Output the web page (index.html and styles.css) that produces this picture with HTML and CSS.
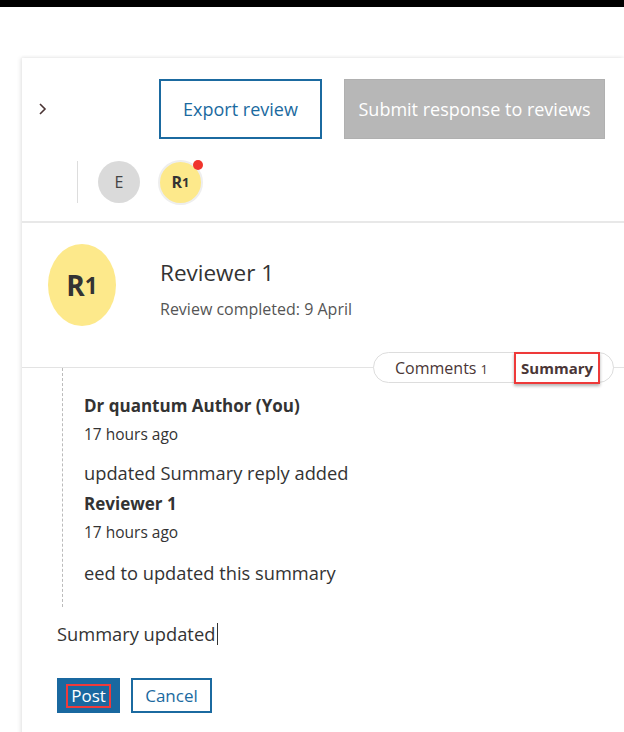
FILE: index.html
```html
<!DOCTYPE html>
<html lang="en">
<head>
    <meta charset="UTF-8">
    <title>Review summary</title>
    <link rel="stylesheet" href="styles.css">
</head>
<body>
    <div class="topbar"></div>

    <div class="panel">
        <div class="panel-head">
            <div class="actions">
                <span class="chevron">
                    <svg width="10" height="14" viewBox="0 0 10 14"><path d="M2 2 L7 7 L2 12" fill="none" stroke="#4a3434" stroke-width="1.6"/></svg>
                </span>
                <button class="btn-outline btn-export">Export review</button>
                <button class="btn-disabled">Submit response to reviews</button>
            </div>
            <div class="avatars">
                <span class="avatar-sep"></span>
                <span class="avatar avatar-e">E</span>
                <span class="avatar avatar-r1">R<small>1</small><i class="dot"></i></span>
            </div>
        </div>

        <div class="reviewer">
            <div class="big-avatar">R<small>1</small></div>
            <div class="reviewer-info">
                <h2>Reviewer 1</h2>
                <p>Review completed: 9 April</p>
            </div>
        </div>

        <div class="tabs-line">
            <div class="tabs">
                <span class="tab">Comments <small>1</small></span>
                <span class="tab tab-active">Summary</span>
            </div>
        </div>

        <div class="thread">
            <div class="reply">
                <div class="reply-author">Dr quantum Author (You)</div>
                <div class="reply-time">17 hours ago</div>
                <div class="reply-text">updated Summary reply added</div>
            </div>
            <div class="reply">
                <div class="reply-author">Reviewer 1</div>
                <div class="reply-time">17 hours ago</div>
                <div class="reply-text">eed to updated this summary</div>
            </div>
        </div>

        <div class="editor">
            <div class="editor-text">Summary updated<span class="caret"></span></div>
            <div class="editor-actions">
                <button class="btn-post"><span>Post</span></button>
                <button class="btn-outline btn-cancel">Cancel</button>
            </div>
        </div>
    </div>
</body>
</html>
```

FILE: styles.css
```css
body {
    margin: 0;
    padding: 0;
    background-color: #ffffff;
    font-family: "Open Sans", Arial, sans-serif;
    color: #333333;
    height: 732px;
    overflow: hidden;
}

.topbar {
    height: 7px;
    background-color: #000000;
}

.panel {
    margin-top: 51px;
    margin-left: 22px;
    height: 680px;
    background-color: #ffffff;
    box-shadow: -2px 0 4px rgba(0, 0, 0, 0.08), 0 -1px 3px rgba(0, 0, 0, 0.05);
}

.panel-head {
    padding-top: 21px;
    border-bottom: 2px solid #e8e8e8;
    height: 165px;
    box-sizing: border-box;
}

.actions {
    display: flex;
    align-items: center;
    height: 60px;
}

.chevron {
    width: 10px;
    height: 14px;
    margin-left: 16px;
    margin-right: 111px;
    display: flex;
}

button {
    font-family: "Open Sans", Arial, sans-serif;
    cursor: pointer;
}

.btn-outline {
    background-color: #ffffff;
    border: 2px solid #1b6aa0;
    color: #1b6aa0;
    box-sizing: border-box;
}

.btn-export {
    width: 163px;
    height: 60px;
    font-size: 18px;
    margin-right: 22px;
}

.btn-disabled {
    width: 261px;
    height: 60px;
    border: 1px solid #b0b0b0;
    background-color: #b7b7b7;
    color: #ffffff;
    font-size: 18px;
}

.avatars {
    display: flex;
    align-items: center;
    margin-top: 21px;
    height: 44px;
}

.avatar-sep {
    width: 1px;
    height: 42px;
    background-color: #dddddd;
    margin-left: 55px;
    margin-right: 20px;
}

.avatar {
    width: 42px;
    height: 42px;
    border-radius: 50%;
    display: flex;
    align-items: center;
    justify-content: center;
    font-size: 16px;
    box-sizing: border-box;
    position: relative;
}

.avatar-e {
    background-color: #dadada;
    color: #444444;
}

.avatar-r1 {
    width: 45px;
    height: 45px;
    margin-left: 18px;
    background-color: #fde98b;
    border: 2px solid #eeeeee;
    font-weight: bold;
    color: #333333;
}

.avatar small,
.big-avatar small {
    font-size: 0.8em;
}

.dot {
    position: absolute;
    top: -2px;
    right: -2px;
    width: 10px;
    height: 10px;
    border-radius: 50%;
    background-color: #f0342c;
}

.reviewer {
    display: flex;
    align-items: center;
    height: 145px;
    border-bottom: 1px solid #e3e3e3;
    box-sizing: border-box;
    padding-bottom: 20px;
}

.big-avatar {
    width: 68px;
    height: 82px;
    border-radius: 50%;
    background-color: #fde98b;
    margin-left: 26px;
    margin-right: 44px;
    display: flex;
    align-items: center;
    justify-content: center;
    font-size: 28px;
    font-weight: bold;
    color: #333333;
}

.reviewer-info {
    padding-top: 6px;
}

.reviewer-info h2 {
    margin: 0 0 10px 0;
    font-size: 22.5px;
    font-weight: normal;
    color: #333333;
}

.reviewer-info p {
    margin: 0;
    font-size: 16px;
    color: #555555;
}

.tabs-line {
    position: relative;
    height: 0;
}

.tabs {
    position: absolute;
    left: 351px;
    top: -16px;
    width: 241px;
    height: 31px;
    border: 1px solid #dddddd;
    border-radius: 16px;
    background-color: #ffffff;
    display: flex;
    align-items: center;
    box-sizing: border-box;
}

.tab {
    font-size: 16px;
    color: #4a3636;
    padding-left: 21px;
}

.tab small {
    font-size: 13px;
}

.tab-active {
    font-weight: bold;
    font-size: 15px;
    margin-left: 26px;
    padding: 4px 5px;
    border: 2px solid #ee3a3a;
    box-shadow: 0 2px 3px rgba(0, 0, 0, 0.3);
}

.thread {
    margin-left: 40px;
    border-left: 1px dashed #bbbbbb;
    padding: 24px 0 0 21px;
    height: 239px;
    box-sizing: border-box;
}

.reply-author {
    font-size: 17px;
    font-weight: bold;
    line-height: 28px;
}

.reply-time {
    font-size: 15.5px;
    line-height: 28px;
}

.reply-text {
    font-size: 18.3px;
    line-height: 28px;
    margin-top: 11px;
}

.reply + .reply {
    margin-top: 3px;
}

.reply + .reply .reply-text {
    margin-top: 13px;
}

.editor {
    padding-left: 35px;
    padding-top: 14px;
}

.editor-text {
    font-size: 18.3px;
    line-height: 26px;
    display: flex;
    align-items: center;
}

.caret {
    display: inline-block;
    width: 1px;
    height: 22px;
    background-color: #333333;
    margin-left: 2px;
}

.editor-actions {
    display: flex;
    margin-top: 31px;
}

.btn-post {
    width: 63px;
    height: 35px;
    background-color: #1968a0;
    border: none;
    color: #ffffff;
    font-size: 17px;
    display: flex;
    align-items: center;
    justify-content: center;
    margin-right: 11px;
}

.btn-post span {
    border: 2px solid #ee3a3a;
    padding: 0 3px;
    line-height: 20px;
}

.btn-cancel {
    width: 81px;
    height: 35px;
    font-size: 17px;
}
```
